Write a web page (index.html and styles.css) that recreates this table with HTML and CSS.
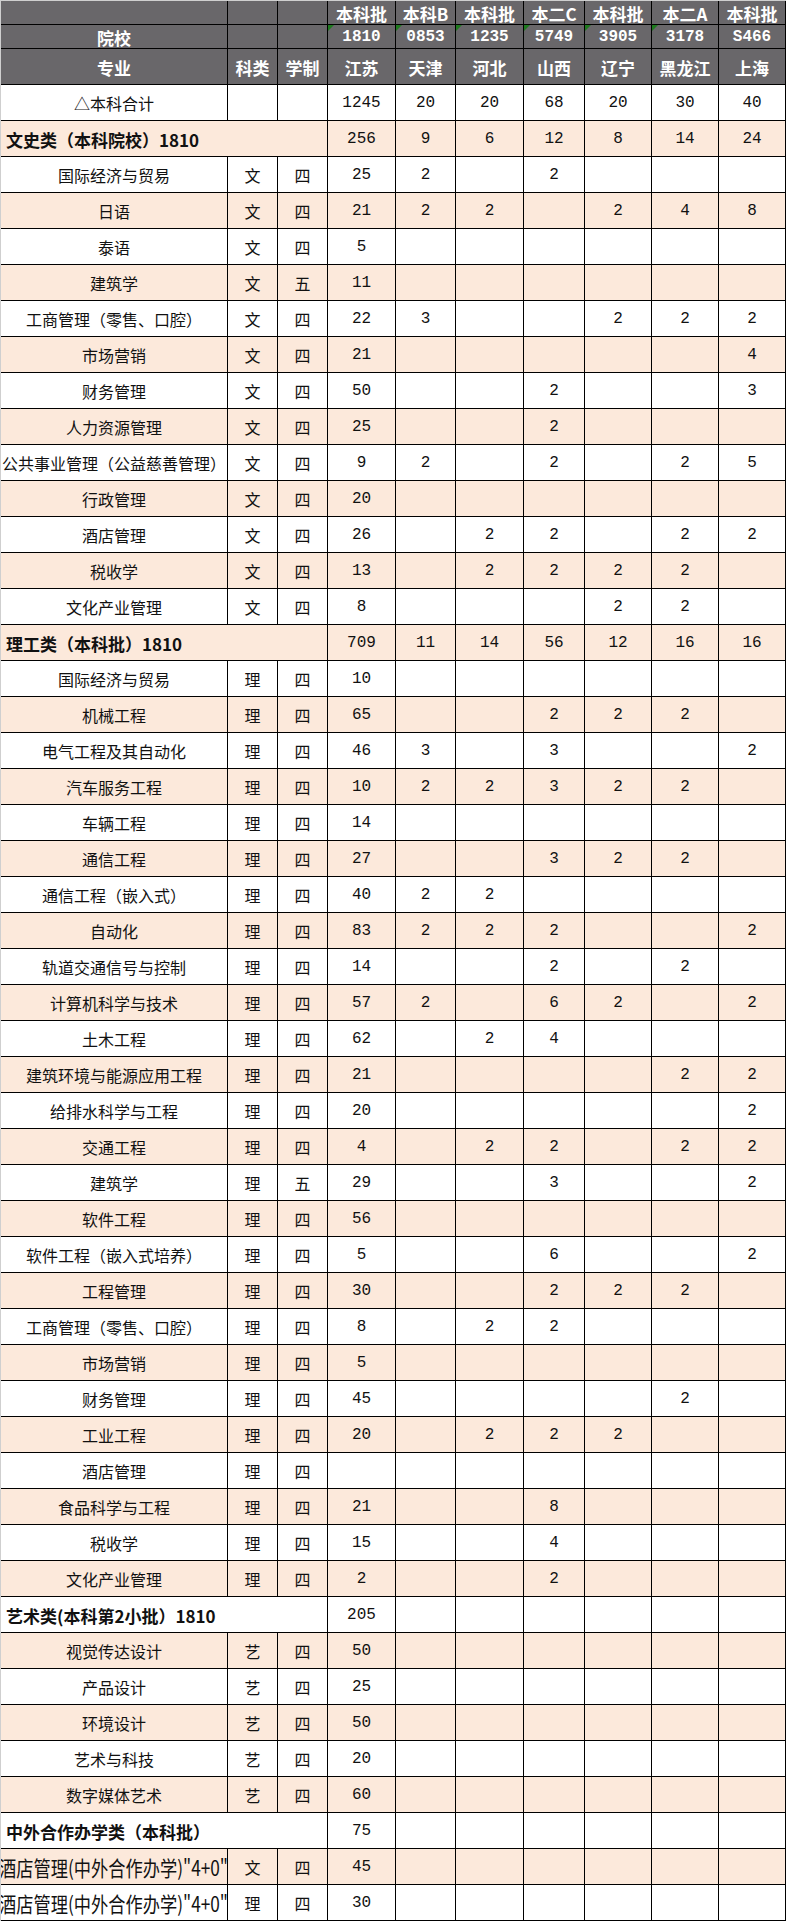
FILE: index.html
```html
<!DOCTYPE html>
<html lang="zh-CN">
<head>
<meta charset="utf-8">
<title>招生计划</title>
<link rel="stylesheet" href="styles.css">
</head>
<body>
<div class="sheet">
  <div class="r hd h1">
    <div></div><div></div><div></div>
    <div>本科批</div><div>本科B</div><div>本科批</div><div>本二C</div><div>本科批</div><div>本二A</div><div>本科批</div>
  </div>
  <div class="r hd h2">
    <div class="big">院校</div><div></div><div></div>
    <div class="code f">1810</div><div class="code f">0853</div><div class="code f">1235</div><div class="code f">5749</div><div class="code f">3905</div><div class="code f">3178</div><div class="code">S466</div>
  </div>
  <div class="r hd h3">
    <div class="big">专业</div><div class="big">科类</div><div class="big">学制</div>
    <div class="big">江苏</div><div class="big">天津</div><div class="big">河北</div><div class="big">山西</div><div class="big">辽宁</div><div class="big">黑龙江</div><div class="big">上海</div>
  </div>

  <div class="r"><div>△本科合计</div><div></div><div></div><div class="n">1245</div><div class="n">20</div><div class="n">20</div><div class="n">68</div><div class="n">20</div><div class="n">30</div><div class="n">40</div></div>
  <div class="r p g"><div class="m">文史类（本科院校）1810</div><div class="n">256</div><div class="n">9</div><div class="n">6</div><div class="n">12</div><div class="n">8</div><div class="n">14</div><div class="n">24</div></div>
  <div class="r"><div>国际经济与贸易</div><div>文</div><div>四</div><div class="n">25</div><div class="n">2</div><div></div><div class="n">2</div><div></div><div></div><div></div></div>
  <div class="r p"><div>日语</div><div>文</div><div>四</div><div class="n">21</div><div class="n">2</div><div class="n">2</div><div></div><div class="n">2</div><div class="n">4</div><div class="n">8</div></div>
  <div class="r"><div>泰语</div><div>文</div><div>四</div><div class="n">5</div><div></div><div></div><div></div><div></div><div></div><div></div></div>
  <div class="r p"><div>建筑学</div><div>文</div><div>五</div><div class="n">11</div><div></div><div></div><div></div><div></div><div></div><div></div></div>
  <div class="r"><div>工商管理（零售、口腔）</div><div>文</div><div>四</div><div class="n">22</div><div class="n">3</div><div></div><div></div><div class="n">2</div><div class="n">2</div><div class="n">2</div></div>
  <div class="r p"><div>市场营销</div><div>文</div><div>四</div><div class="n">21</div><div></div><div></div><div></div><div></div><div></div><div class="n">4</div></div>
  <div class="r"><div>财务管理</div><div>文</div><div>四</div><div class="n">50</div><div></div><div></div><div class="n">2</div><div></div><div></div><div class="n">3</div></div>
  <div class="r p"><div>人力资源管理</div><div>文</div><div>四</div><div class="n">25</div><div></div><div></div><div class="n">2</div><div></div><div></div><div></div></div>
  <div class="r"><div>公共事业管理（公益慈善管理）</div><div>文</div><div>四</div><div class="n">9</div><div class="n">2</div><div></div><div class="n">2</div><div></div><div class="n">2</div><div class="n">5</div></div>
  <div class="r p"><div>行政管理</div><div>文</div><div>四</div><div class="n">20</div><div></div><div></div><div></div><div></div><div></div><div></div></div>
  <div class="r"><div>酒店管理</div><div>文</div><div>四</div><div class="n">26</div><div></div><div class="n">2</div><div class="n">2</div><div></div><div class="n">2</div><div class="n">2</div></div>
  <div class="r p"><div>税收学</div><div>文</div><div>四</div><div class="n">13</div><div></div><div class="n">2</div><div class="n">2</div><div class="n">2</div><div class="n">2</div><div></div></div>
  <div class="r"><div>文化产业管理</div><div>文</div><div>四</div><div class="n">8</div><div></div><div></div><div></div><div class="n">2</div><div class="n">2</div><div></div></div>
  <div class="r p g"><div class="m">理工类（本科批）1810</div><div class="n">709</div><div class="n">11</div><div class="n">14</div><div class="n">56</div><div class="n">12</div><div class="n">16</div><div class="n">16</div></div>
  <div class="r"><div>国际经济与贸易</div><div>理</div><div>四</div><div class="n">10</div><div></div><div></div><div></div><div></div><div></div><div></div></div>
  <div class="r p"><div>机械工程</div><div>理</div><div>四</div><div class="n">65</div><div></div><div></div><div class="n">2</div><div class="n">2</div><div class="n">2</div><div></div></div>
  <div class="r"><div>电气工程及其自动化</div><div>理</div><div>四</div><div class="n">46</div><div class="n">3</div><div></div><div class="n">3</div><div></div><div></div><div class="n">2</div></div>
  <div class="r p"><div>汽车服务工程</div><div>理</div><div>四</div><div class="n">10</div><div class="n">2</div><div class="n">2</div><div class="n">3</div><div class="n">2</div><div class="n">2</div><div></div></div>
  <div class="r"><div>车辆工程</div><div>理</div><div>四</div><div class="n">14</div><div></div><div></div><div></div><div></div><div></div><div></div></div>
  <div class="r p"><div>通信工程</div><div>理</div><div>四</div><div class="n">27</div><div></div><div></div><div class="n">3</div><div class="n">2</div><div class="n">2</div><div></div></div>
  <div class="r"><div>通信工程（嵌入式）</div><div>理</div><div>四</div><div class="n">40</div><div class="n">2</div><div class="n">2</div><div></div><div></div><div></div><div></div></div>
  <div class="r p"><div>自动化</div><div>理</div><div>四</div><div class="n">83</div><div class="n">2</div><div class="n">2</div><div class="n">2</div><div></div><div></div><div class="n">2</div></div>
  <div class="r"><div>轨道交通信号与控制</div><div>理</div><div>四</div><div class="n">14</div><div></div><div></div><div class="n">2</div><div></div><div class="n">2</div><div></div></div>
  <div class="r p"><div>计算机科学与技术</div><div>理</div><div>四</div><div class="n">57</div><div class="n">2</div><div></div><div class="n">6</div><div class="n">2</div><div></div><div class="n">2</div></div>
  <div class="r"><div>土木工程</div><div>理</div><div>四</div><div class="n">62</div><div></div><div class="n">2</div><div class="n">4</div><div></div><div></div><div></div></div>
  <div class="r p"><div>建筑环境与能源应用工程</div><div>理</div><div>四</div><div class="n">21</div><div></div><div></div><div></div><div></div><div class="n">2</div><div class="n">2</div></div>
  <div class="r"><div>给排水科学与工程</div><div>理</div><div>四</div><div class="n">20</div><div></div><div></div><div></div><div></div><div></div><div class="n">2</div></div>
  <div class="r p"><div>交通工程</div><div>理</div><div>四</div><div class="n">4</div><div></div><div class="n">2</div><div class="n">2</div><div></div><div class="n">2</div><div class="n">2</div></div>
  <div class="r"><div>建筑学</div><div>理</div><div>五</div><div class="n">29</div><div></div><div></div><div class="n">3</div><div></div><div></div><div class="n">2</div></div>
  <div class="r p"><div>软件工程</div><div>理</div><div>四</div><div class="n">56</div><div></div><div></div><div></div><div></div><div></div><div></div></div>
  <div class="r"><div>软件工程（嵌入式培养）</div><div>理</div><div>四</div><div class="n">5</div><div></div><div></div><div class="n">6</div><div></div><div></div><div class="n">2</div></div>
  <div class="r p"><div>工程管理</div><div>理</div><div>四</div><div class="n">30</div><div></div><div></div><div class="n">2</div><div class="n">2</div><div class="n">2</div><div></div></div>
  <div class="r"><div>工商管理（零售、口腔）</div><div>理</div><div>四</div><div class="n">8</div><div></div><div class="n">2</div><div class="n">2</div><div></div><div></div><div></div></div>
  <div class="r p"><div>市场营销</div><div>理</div><div>四</div><div class="n">5</div><div></div><div></div><div></div><div></div><div></div><div></div></div>
  <div class="r"><div>财务管理</div><div>理</div><div>四</div><div class="n">45</div><div></div><div></div><div></div><div></div><div class="n">2</div><div></div></div>
  <div class="r p"><div>工业工程</div><div>理</div><div>四</div><div class="n">20</div><div></div><div class="n">2</div><div class="n">2</div><div class="n">2</div><div></div><div></div></div>
  <div class="r"><div>酒店管理</div><div>理</div><div>四</div><div></div><div></div><div></div><div></div><div></div><div></div><div></div></div>
  <div class="r p"><div>食品科学与工程</div><div>理</div><div>四</div><div class="n">21</div><div></div><div></div><div class="n">8</div><div></div><div></div><div></div></div>
  <div class="r"><div>税收学</div><div>理</div><div>四</div><div class="n">15</div><div></div><div></div><div class="n">4</div><div></div><div></div><div></div></div>
  <div class="r p"><div>文化产业管理</div><div>理</div><div>四</div><div class="n">2</div><div></div><div></div><div class="n">2</div><div></div><div></div><div></div></div>
  <div class="r g"><div class="m">艺术类(本科第2小批）1810</div><div class="n">205</div><div></div><div></div><div></div><div></div><div></div><div></div></div>
  <div class="r p"><div>视觉传达设计</div><div>艺</div><div>四</div><div class="n">50</div><div></div><div></div><div></div><div></div><div></div><div></div></div>
  <div class="r"><div>产品设计</div><div>艺</div><div>四</div><div class="n">25</div><div></div><div></div><div></div><div></div><div></div><div></div></div>
  <div class="r p"><div>环境设计</div><div>艺</div><div>四</div><div class="n">50</div><div></div><div></div><div></div><div></div><div></div><div></div></div>
  <div class="r"><div>艺术与科技</div><div>艺</div><div>四</div><div class="n">20</div><div></div><div></div><div></div><div></div><div></div><div></div></div>
  <div class="r p"><div>数字媒体艺术</div><div>艺</div><div>四</div><div class="n">60</div><div></div><div></div><div></div><div></div><div></div><div></div></div>
  <div class="r g"><div class="m">中外合作办学类（本科批）</div><div class="n">75</div><div></div><div></div><div></div><div></div><div></div><div></div></div>
  <div class="r p"><div><span class="sq">酒店管理(中外合作办学)"4+0"</span></div><div>文</div><div>四</div><div class="n">45</div><div></div><div></div><div></div><div></div><div></div><div></div></div>
  <div class="r"><div><span class="sq">酒店管理(中外合作办学)"4+0"</span></div><div>理</div><div>四</div><div class="n">30</div><div></div><div></div><div></div><div></div><div></div><div></div></div>
</div>
</body>
</html>
```

FILE: styles.css
```css
html, body {
  margin: 0;
  padding: 0;
  background: #ffffff;
}

body {
  font-family: "Noto Sans CJK SC", "Noto Sans", sans-serif;
  color: #111111;
}

.sheet {
  display: grid;
  grid-template-columns: 226px 49px 49px 67px 59px 67px 60px 66px 66px 66px;
  grid-template-rows: 23px 23px 35px repeat(51, 35px);
  gap: 1px;
  width: max-content;
  background: #000000;
  border-left: 1px solid #cfcfcf;
  border-top: 1px solid #cfcfcf;
  padding: 0 1px 1px 0;
}

.r {
  display: contents;
}

.r > div {
  background: #ffffff;
  display: flex;
  align-items: center;
  justify-content: center;
  font-size: 16px;
  line-height: 1;
  white-space: nowrap;
  overflow: hidden;
  padding-top: 1px;
}

.r.p > div {
  background: #fce9db;
}

.r > .n {
  font-family: "Liberation Mono", "DejaVu Sans Mono", monospace;
  font-size: 16px;
}

/* header */
.hd > div {
  background: #69676a;
  color: #ffffff;
  font-weight: bold;
  font-size: 17px;
}

.hd > .big {
  font-size: 17px;
}

.hd > .code {
  font-family: "Liberation Mono", "DejaVu Sans Mono", monospace;
  font-size: 16px;
  font-weight: bold;
}

.f {
  position: relative;
}

.f::before {
  content: "";
  position: absolute;
  left: 0;
  top: 0;
  border-top: 6px solid #1f7a1f;
  border-right: 6px solid transparent;
}

/* group rows */
.g > .m {
  grid-column: span 3;
  justify-content: flex-start;
  padding-left: 5px;
  font-weight: bold;
  font-size: 17px;
}

.sq {
  display: inline-block;
  font-size: 21px;
  transform: scaleX(0.82);
  flex: none;
}
```
